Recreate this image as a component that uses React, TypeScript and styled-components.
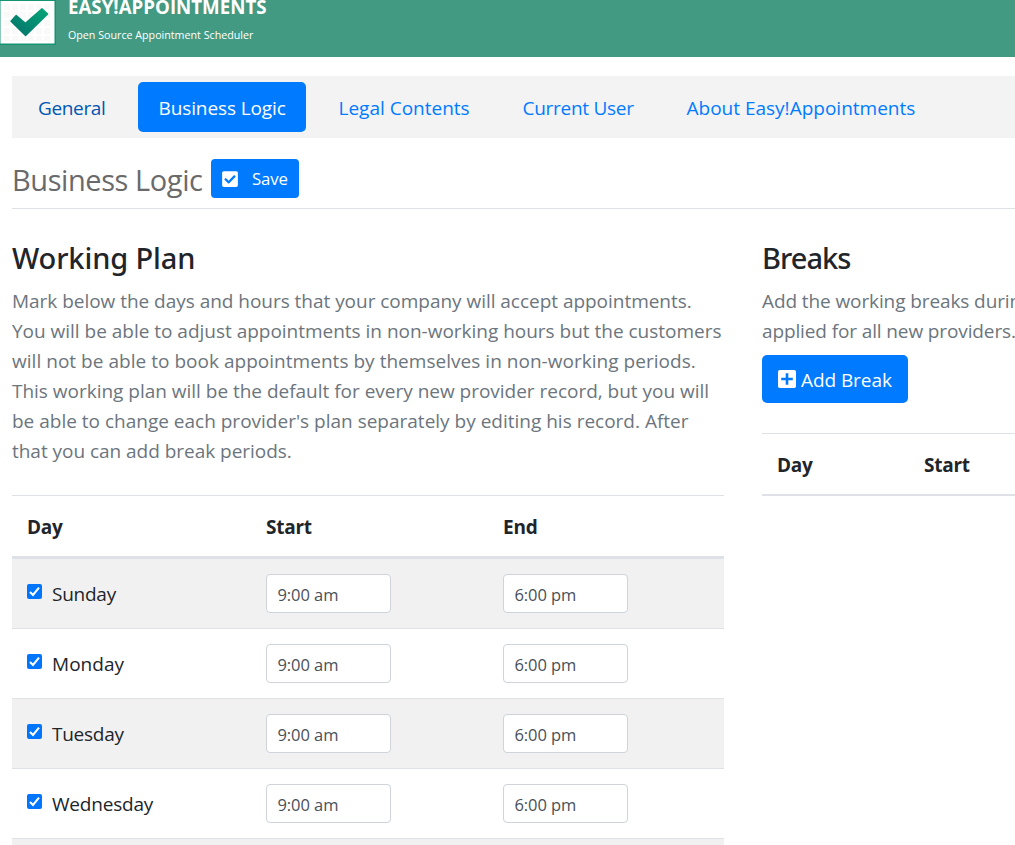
import React from 'react';
import styled, { createGlobalStyle } from 'styled-components';
import { FaCheckSquare } from 'react-icons/fa';

const GlobalStyle = createGlobalStyle`
  * { box-sizing: border-box; }
  body {
    margin: 0;
    background: #fff;
    color: #212529;
    font-family: "Open Sans", "Noto Sans", sans-serif;
    font-size: 19px;
    line-height: 30px;
    overflow: hidden;
  }
`;

const Page = styled.div`
  width: 1015px;
  height: 845px;
  overflow: hidden;
`;

const Header = styled.header`
  display: flex;
  height: 57px;
  background: #439a82;
  color: #fff;
`;

const Logo = styled.svg`
  flex: none;
  width: 56px;
  height: 45px;
  margin-right: 12px;
`;

const Brand = styled.div`
  display: flex;
  flex-direction: column;
  gap: 6px;
  margin-top: -7px;
`;

const BrandName = styled.strong`
  font-size: 18.7px;
  font-weight: 700;
  line-height: 28px;
`;

const BrandTagline = styled.small`
  font-size: 10.7px;
  line-height: 16px;
`;

const Content = styled.main`
  padding: 19px 0 0 12px;
`;

const Nav = styled.nav`
  display: flex;
  gap: 12px;
  height: 62px;
  padding: 6px;
  background: #f3f3f3;
`;

const NavLink = styled.a<{ $width: number; $active?: boolean; $visited?: boolean; $track?: number }>`
  width: ${p => p.$width}px;
  height: 50px;
  padding: 11px 0 9px ${p => (p.$visited ? 20 : 20.5)}px;
  border-radius: 5px;
  white-space: nowrap;
  letter-spacing: ${p => p.$track ?? 0}px;
  background: ${p => (p.$active ? '#007bff' : 'transparent')};
  color: ${p => (p.$active ? '#fff' : p.$visited ? '#0056b3' : '#007bff')};
`;

const TitleBar = styled.div`
  display: flex;
  align-items: flex-start;
  gap: 8px;
  height: 71px;
  padding-top: 21px;
  border-bottom: 1px solid #dee2e6;
`;

const Title = styled.h1`
  width: 191px;
  margin: -1px 0 0;
  font-size: 29px;
  font-weight: 400;
  line-height: 44px;
  letter-spacing: -0.42px;
  white-space: nowrap;
  color: #6a6a6a;
`;

const Button = styled.button<{ $large?: boolean }>`
  display: flex;
  align-items: center;
  width: ${p => (p.$large ? 146 : 88)}px;
  height: ${p => (p.$large ? 48 : 39)}px;
  padding: ${p => (p.$large ? '1px 0 0 16px' : '0 0 0 11px')};
  gap: ${p => (p.$large ? 5 : 14)}px;
  border: 0;
  border-radius: ${p => (p.$large ? 5 : 4)}px;
  background: #007bff;
  color: #fff;
  font-family: inherit;
  font-size: ${p => (p.$large ? 19 : 16.8)}px;
  letter-spacing: ${p => (p.$large ? -0.07 : -0.1)}px;
  white-space: nowrap;

  svg {
    flex: none;
    width: ${p => (p.$large ? 18 : 16)}px;
    height: 18px;
  }
`;

const PlusIcon = styled.svg`
  margin-top: -1px;
`;

const Columns = styled.div`
  display: grid;
  grid-template-columns: 712px 712px;
  column-gap: 38px;
  padding-top: 27px;
`;

const Section = styled.section`
  min-width: 0;
`;

const SectionTitle = styled.h2<{ $track: number }>`
  margin: 0 0 6px;
  font-family: "Noto Sans", "Open Sans", sans-serif;
  font-size: 29px;
  font-weight: 500;
  line-height: 44px;
  letter-spacing: ${p => p.$track}px;
`;

const Description = styled.p`
  margin: 0;
  color: #6c757d;
`;

const Line = styled.span<{ $track?: number }>`
  display: block;
  white-space: nowrap;
  letter-spacing: ${p => p.$track ?? 0}px;
`;

const BreakActions = styled.div`
  padding-top: 9px;
`;

const Table = styled.div<{ $gap: number }>`
  margin-top: ${p => p.$gap}px;
  border-top: 1px solid #dee2e6;
`;

const HeadRow = styled.div<{ $columns: string; $rule: number }>`
  display: grid;
  grid-template-columns: ${p => p.$columns};
  height: ${p => 60 + p.$rule}px;
  padding: 16px 0 0 15px;
  border-bottom: ${p => p.$rule}px solid #dee2e6;
  font-weight: 700;
  letter-spacing: -0.25px;
`;

const Row = styled.div<{ $striped?: boolean }>`
  display: grid;
  grid-template-columns: 239px 237px 1fr;
  height: 70px;
  padding: 15px 0 0 15px;
  border-bottom: 1px solid #dee2e6;
  background: ${p => (p.$striped ? '#f1f1f1' : '#fff')};
`;

const DayLabel = styled.label<{ $track: number }>`
  display: flex;
  align-items: flex-start;
  gap: 10px;
  padding-top: 5px;
  letter-spacing: ${p => p.$track}px;
`;

const CheckBox = styled.svg`
  flex: none;
  width: 15px;
  height: 15px;
  margin-top: 5px;
`;

const TimeInput = styled.input`
  width: 125px;
  height: 39px;
  padding: 2px 10px 0 10.4px;
  border: 1px solid #ced4da;
  border-radius: 4px;
  background: #fff;
  color: #495057;
  font-family: inherit;
  font-size: 16.5px;
  letter-spacing: -0.05px;
`;

const days = [
  { name: 'Sunday', track: -0.25 },
  { name: 'Monday', track: 0.05 },
  { name: 'Tuesday', track: -0.25 },
  { name: 'Wednesday', track: -0.2 },
];

function BrandMark() {
  return (
    <Logo viewBox="0 0 56 45">
      <defs>
        <linearGradient id="tick" x1="0" y1="1" x2="1" y2="0">
          <stop offset="0" stopColor="#04706a" />
          <stop offset="1" stopColor="#05a678" />
        </linearGradient>
        <pattern id="tiles" x="4" y="4" width="8" height="8" patternUnits="userSpaceOnUse">
          <rect width="6" height="6" rx="1" fill="#f9f9f9" />
        </pattern>
      </defs>
      <rect width="56" height="45" fill="#159474" />
      <rect x="0.5" y="1" width="54" height="42.5" fill="#fff" />
      <rect x="4" y="4" width="48" height="37" fill="url(#tiles)" />
      <path
        d="M11 21.2 16.2 15.6 25.4 23.2 42 8.8 47.6 14 25.6 35.6Z"
        fill="url(#tick)"
        stroke="url(#tick)"
        strokeWidth="1.4"
        strokeLinejoin="round"
      />
    </Logo>
  );
}

export default function App() {
  return (
    <Page>
      <GlobalStyle />
      <Header>
        <BrandMark />
        <Brand>
          <BrandName>EASY!APPOINTMENTS</BrandName>
          <BrandTagline>Open Source Appointment Scheduler</BrandTagline>
        </Brand>
      </Header>
      <Content>
        <Nav>
          <NavLink $width={108} $visited $track={-0.35}>General</NavLink>
          <NavLink $width={168} $active $track={-0.11}>Business Logic</NavLink>
          <NavLink $width={172}>Legal Contents</NavLink>
          <NavLink $width={152} $track={-0.28}>Current User</NavLink>
          <NavLink $width={269}>About Easy!Appointments</NavLink>
        </Nav>
        <TitleBar>
          <Title>Business Logic</Title>
          <Button><FaCheckSquare />Save</Button>
        </TitleBar>
        <Columns>
          <Section>
            <SectionTitle $track={-0.12}>Working Plan</SectionTitle>
            <Description>
              <Line $track={-0.03}>Mark below the days and hours that your company will accept appointments.</Line>
              <Line $track={-0.015}>You will be able to adjust appointments in non-working hours but the customers</Line>
              <Line $track={0.03}>will not be able to book appointments by themselves in non-working periods.</Line>
              <Line $track={-0.015}>This working plan will be the default for every new provider record, but you will</Line>
              <Line>be able to change each provider's plan separately by editing his record. After</Line>
              <Line $track={-0.03}>that you can add break periods.</Line>
            </Description>
            <Table $gap={29}>
              <HeadRow $columns="239px 237px 1fr" $rule={3}>
                <span>Day</span><span>Start</span><span>End</span>
              </HeadRow>
              {days.map((day, i) => (
                <Row key={day.name} $striped={i % 2 === 0}>
                  <DayLabel $track={day.track}>
                    <CheckBox viewBox="0 0 15 15">
                      <rect width="15" height="15" rx="2" fill="#0075ff" />
                      <path d="M3 8 6 11 12 3.7" fill="none" stroke="#fff" strokeWidth="2.1" />
                    </CheckBox>
                    {day.name}
                  </DayLabel>
                  <TimeInput defaultValue="9:00 am" />
                  <TimeInput defaultValue="6:00 pm" />
                </Row>
              ))}
              <Row $striped />
            </Table>
          </Section>
          <Section>
            <SectionTitle $track={-0.95}>Breaks</SectionTitle>
            <Description>
              <Line $track={-0.1}>Add the working breaks during</Line>
              <Line $track={-0.12}>applied for all new providers.</Line>
            </Description>
            <BreakActions>
              <Button $large>
                <PlusIcon viewBox="0 0 18 18">
                  <rect width="18" height="18" rx="1.8" fill="#fff" />
                  <path d="M9 3.2V14.8M3.2 9H14.8" stroke="#007bff" strokeWidth="2.6" />
                </PlusIcon>
                Add Break
              </Button>
            </BreakActions>
            <Table $gap={30}>
              <HeadRow $columns="147px 1fr" $rule={2}>
                <span>Day</span><span>Start</span>
              </HeadRow>
            </Table>
          </Section>
        </Columns>
      </Content>
    </Page>
  );
}
